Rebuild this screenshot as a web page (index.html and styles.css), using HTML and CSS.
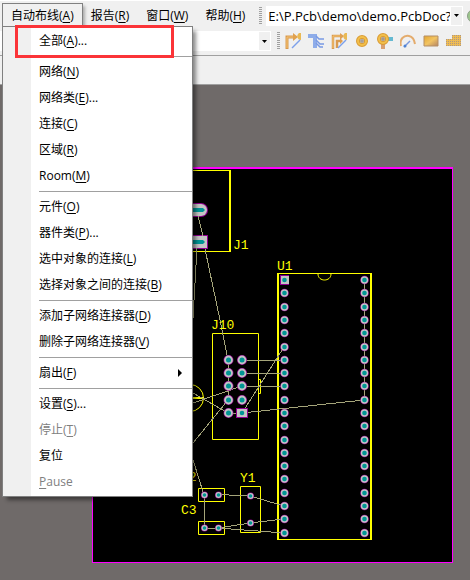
FILE: index.html
```html
<!DOCTYPE html>
<html lang="zh-CN">
<head>
<meta charset="utf-8">
<title>PCB 编辑器</title>
<link rel="stylesheet" href="styles.css">
</head>
<body>
<header class="menubar">
  <nav class="menus">
    <button class="menu-title open" type="button" aria-expanded="true">自动布线(<u>A</u>)</button>
    <button class="menu-title" type="button">报告(<u>R</u>)</button>
    <button class="menu-title" type="button">窗口(<u>W</u>)</button>
    <button class="menu-title" type="button">帮助(<u>H</u>)</button>
  </nav>
  <span class="grip"></span>
  <div class="address">
    <input class="address-text" type="text" aria-label="文档路径" value="E:\P.Pcb\demo\demo.PcbDoc?V">
    <button class="drop" type="button" aria-label="展开路径"><svg width="5" height="3" viewBox="0 0 5 3"><path d="M0 0h5L2.500 3z"/></svg></button>
  </div>
  <button class="go" type="button" aria-label="转到"><svg width="14" height="14" viewBox="0 0 14 14"><circle cx="7" cy="7" r="6.500" fill="#9cc68c" stroke="#8b9c86"/></svg></button>
</header>

<div class="toolbar">
  <div class="combo">
    <input class="combo-text" type="text" aria-label="过滤器">
    <button class="drop" type="button" aria-label="展开过滤器"><svg width="5" height="3" viewBox="0 0 5 3"><path d="M0 0h5L2.500 3z"/></svg></button>
  </div>
  <span class="grip"></span>
  <div class="tools">
    <button class="tool" type="button" aria-label="交互式布线"><svg viewBox="0 0 16 16"><path d="M2 16V4h8" fill="none" stroke="#d99a4e" stroke-width="3"/><path d="M2 15V4h7" fill="none" stroke="#f5c373"/><path d="M8 0l5 4-5 4z" fill="#e0a14e"/><path d="M16 0v7c-4 0-5-5-2-7z" fill="#e9b954"/><path d="M7 15l8-8" stroke="#7da0ea" stroke-width="1.500"/></svg></button>
    <button class="tool" type="button" aria-label="总线布线"><svg viewBox="0 0 16 16"><path d="M0 3h9M7 2v13" fill="none" stroke="#8eace9" stroke-width="4"/><path d="M8 3l3 3h5M8 7l4 4h4M8 10l4 4h3" fill="none" stroke="#7899e3" stroke-width="1.500"/></svg></button>
    <button class="tool" type="button" aria-label="差分对布线"><svg viewBox="0 0 16 16"><path d="M2 16V3h8M6 15V8h4" fill="none" stroke="#d99a4e" stroke-width="2.500"/><path d="M2 15V3h8" fill="none" stroke="#f5c373"/><path d="M9 0l4 3-4 4zM9 5l3 3-3 3z" fill="#dfa052"/><path d="M16 0v7c-4 0-5-5-2-7z" fill="#e9b954"/><path d="M7 15l8-8" stroke="#7da0ea" stroke-width="1.500"/></svg></button>
    <button class="tool" type="button" aria-label="放置焊盘"><svg viewBox="0 0 16 16"><circle cx="8" cy="8" r="4" fill="#eee" stroke="#d99b35" stroke-width="4"/><circle cx="8" cy="8" r="4" fill="none" stroke="#f2bf4a" stroke-width="2"/><circle cx="8" cy="8" r="2" fill="#aaa098"/></svg></button>
    <button class="tool" type="button" aria-label="放置过孔"><svg viewBox="0 0 16 16"><path d="M8 4h8v4H8z" fill="#65b9d1"/><path d="M4 8h4v8H4z" fill="#d9a071"/><circle cx="6" cy="6" r="4" fill="#eee" stroke="#d99b35" stroke-width="4"/><circle cx="6" cy="6" r="4" fill="none" stroke="#f2bf4a" stroke-width="2"/><circle cx="6" cy="6" r="2" fill="#a99a8a"/></svg></button>
    <button class="tool" type="button" aria-label="放置圆弧"><svg viewBox="0 0 16 16"><path d="M1 13C-1 6 4 2 9 3q5 1 6 8" fill="none" stroke="#e4ac6d" stroke-width="2"/><path d="M4 14l6-6" stroke="#7797de" stroke-width="1.500"/><circle cx="5" cy="13" r="1.500" fill="#4e83d4"/></svg></button>
    <button class="tool" type="button" aria-label="放置填充"><svg viewBox="0 0 16 16"><defs><linearGradient id="gold" x2="1" y2="1"><stop stop-color="#e3a52e"/><stop offset=".5" stop-color="#f2c463"/><stop offset="1" stop-color="#b58565"/></linearGradient></defs><path d="M1 3h14v10H1z" fill="url(#gold)" stroke="#b58f66"/></svg></button>
    <button class="tool" type="button" aria-label="放置覆铜"><svg viewBox="0 0 16 16"><defs><pattern id="mesh" width="2" height="2" patternUnits="userSpaceOnUse"><path d="M0 0h2v2H0z" fill="#efbc54"/><path d="M0 0h1v1H0z" fill="#ad9884"/></pattern></defs><path d="M6 2h9v11H0V6h6z" fill="url(#mesh)"/></svg></button>
  </div>
</div>

<div class="tabstrip"></div>

<main class="workspace">
  <svg class="board" viewBox="92 167 361 396" role="img" aria-label="PCB 布局">
    <defs>
      <g id="pin"><circle r="4.300" class="mask"/><circle r="3.700" class="pad"/><circle r="2.300" class="hole"/></g>
      <g id="pin-large"><circle r="5" class="mask"/><circle r="4.400" class="pad"/><circle r="2.500" class="hole"/></g>
      <g id="pin-small"><circle r="3.500" class="mask"/><circle r="3" class="pad"/><circle r="1.800" class="hole"/></g>
      <g id="column">
        <use href="#pin" y="293"/><use href="#pin" y="307"/><use href="#pin" y="320"/><use href="#pin" y="333"/><use href="#pin" y="347"/><use href="#pin" y="360"/><use href="#pin" y="373"/><use href="#pin" y="386"/><use href="#pin" y="400"/><use href="#pin" y="413"/><use href="#pin" y="426"/><use href="#pin" y="440"/><use href="#pin" y="453"/><use href="#pin" y="466"/><use href="#pin" y="479"/><use href="#pin" y="493"/><use href="#pin" y="506"/><use href="#pin" y="519"/><use href="#pin" y="533"/>
      </g>
    </defs>
    <path d="M92 167h361v396H92z" fill="#000"/>
    <path class="edge" d="M92.500 168v395M452.500 168v395M92 562.500h361"/>
    <path class="edge thick" d="M92 168h361"/>

    <g class="outline">
      <path d="M92 170.500h138M92 251.500h138"/>
      <path class="thick" d="M230 170v82"/>
      <path d="M212.500 333.500h46v106h-46zM258 379.500h2.500v14H258"/>
      <path d="M277 273.500h94M277 539.500h94M318 274c0 8 13 8 13 0"/>
      <path class="thick" d="M278 273v267M371 273v267"/>
      <path d="M198.500 488.500h26v13h-26zM198.500 521.500h26v13h-26zM240.500 486.500h20v46h-20z"/>
      <circle cx="190" cy="398" r="13.500"/>
      <path class="thick" d="M185 398h19"/>
    </g>

    <g class="pads">
      <rect x="170" y="203" width="38" height="14" rx="7" class="mask"/><rect x="170" y="204" width="37" height="12" rx="6" class="pad"/><path class="hole" d="M180 208h23l2 2-2 2h-23z"/>
      <path class="mask" d="M170 235h38v14h-38z"/><path class="pad" d="M170 236h37v12h-37z"/><path class="hole" d="M180 240h23l2 2-2 2h-23z"/>
    </g>

    <path class="net" d="M198 216L203 236M205 249L220 320L228 360V400L193 443M197 248L193 318M242 360.500H284M242 373.500H284M242 386.500H284M193 403L242 386M193 393L228 413H242L364 400M242 413L284 347M364.500 280V400M193 460L204 495V528H218L250 523L284 519M218 494.500L250 496L284 506M218 528L284 533"/>

    <g class="pads">
      <path class="mask" d="M280 275h9v10h-9z"/><path class="pad" d="M281 276h8v8h-8z"/><circle class="hole" cx="284.500" cy="280" r="2.300"/>
      <use href="#column" x="284.500"/><use href="#pin" x="364.500" y="280"/><use href="#column" x="364.500"/>
      <use href="#pin-large" x="228.500" y="360"/><use href="#pin-large" x="228.500" y="373"/><use href="#pin-large" x="228.500" y="386"/><use href="#pin-large" x="228.500" y="400"/><use href="#pin-large" x="228.500" y="413"/>
      <use href="#pin-large" x="242" y="360"/><use href="#pin-large" x="242" y="373"/><use href="#pin-large" x="242" y="386"/><use href="#pin-large" x="242" y="400"/>
      <path class="mask" d="M236 408h12v10h-12z"/><path class="pad" d="M237 409h10v8h-10z"/><circle class="hole" cx="242" cy="413" r="2.300"/>
      <use href="#pin-small" x="204.500" y="495"/><use href="#pin-small" x="218.500" y="495"/><use href="#pin-small" x="204.500" y="528"/><use href="#pin-small" x="218.500" y="528"/>
      <use href="#pin-small" x="250.500" y="496"/><use href="#pin-small" x="250.500" y="523"/>
    </g>

    <g class="label">
      <text x="233" y="249">J1</text>
      <text x="277" y="270">U1</text>
      <text x="211" y="329">J10</text>
      <text x="240" y="482">Y1</text>
      <text x="181" y="481">C2</text>
      <text x="181" y="514">C3</text>
    </g>
  </svg>
</main>

<div class="popup" role="menu">
  <div class="group">
    <button class="item" role="menuitem" type="button">全部(<u>A</u>)...</button>
  </div>
  <div class="group">
    <button class="item" role="menuitem" type="button">网络(<u>N</u>)</button>
    <button class="item" role="menuitem" type="button">网络类(<u>E</u>)...</button>
    <button class="item" role="menuitem" type="button">连接(<u>C</u>)</button>
    <button class="item" role="menuitem" type="button">区域(<u>R</u>)</button>
    <button class="item" role="menuitem" type="button">Room(<u>M</u>)</button>
  </div>
  <div class="group">
    <button class="item" role="menuitem" type="button">元件(<u>O</u>)</button>
    <button class="item" role="menuitem" type="button">器件类(<u>P</u>)...</button>
    <button class="item" role="menuitem" type="button">选中对象的连接(<u>L</u>)</button>
    <button class="item" role="menuitem" type="button">选择对象之间的连接(<u>B</u>)</button>
  </div>
  <div class="group">
    <button class="item" role="menuitem" type="button">添加子网络连接器(<u>D</u>)</button>
    <button class="item" role="menuitem" type="button">删除子网络连接器(<u>V</u>)</button>
  </div>
  <div class="group">
    <button class="item" role="menuitem" type="button" aria-haspopup="true"><span>扇出(<u>F</u>)</span><svg class="more" width="4" height="8" viewBox="0 0 4 8"><path d="M0 0l4 4-4 4z"/></svg></button>
  </div>
  <div class="group">
    <button class="item" role="menuitem" type="button">设置(<u>S</u>)...</button>
    <button class="item" role="menuitem" type="button" disabled>停止(<u>T</u>)</button>
    <button class="item" role="menuitem" type="button">复位</button>
    <button class="item" role="menuitem" type="button" disabled><u>P</u>ause</button>
  </div>
</div>
<div class="highlight"></div>
</body>
</html>
```
FILE: styles.css
```css
* { box-sizing: border-box; }

body {
  margin: 0;
  min-height: 100vh;
  display: flex;
  flex-direction: column;
  position: relative;
  overflow: hidden;
  background: #6f6a69;
  color: #000;
  font: 12px/16px "Open Sans", "Noto Sans CJK SC", sans-serif;
}

button, input {
  margin: 0;
  padding: 0;
  border: 0;
  background: none;
  color: inherit;
  font: inherit;
  white-space: nowrap;
}

u { text-underline-offset: 2px; }
svg { display: block; flex: none; }

.menubar, .toolbar {
  display: flex;
  align-items: center;
  background: #f0f0f0;
}

.menubar {
  height: 30px;
  border-top: 1px solid #fff;
}

.menus {
  display: flex;
  flex: none;
  gap: 1px;
  padding-left: 3px;
}

.menu-title {
  height: 24px;
  padding: 0 8px;
}

.menu-title.open {
  background: #f0f0f0;
  box-shadow: 0 0 0 1px #808080, 3px 2px 3px #aaa;
}

.grip {
  flex: none;
  width: 3px;
  height: 18px;
  margin: 0 4px 0 6px;
  background: repeating-linear-gradient(#a0a0a0 0 1px, #f0f0f0 1px 2px);
}

.address, .combo {
  display: flex;
  background: #fff;
  height: 20px;
}

.address { flex: 1; min-width: 0; }

.address-text {
  flex: 1;
  min-width: 0;
  padding-left: 2px;
  font-size: 13px;
}

.drop {
  width: 11px;
  margin: 1px;
  background: #f0f0f0;
  display: grid;
  place-items: center;
  flex: none;
}

.go {
  flex: none;
  width: 3px;
  margin-left: 4px;
  overflow: hidden;
}

.toolbar {
  height: 26px;
  padding-bottom: 3px;
  border-bottom: 1px solid #a0a0a0;
}

.combo { width: 271px; flex: none; }
.combo-text { flex: 1; min-width: 0; }

.tools {
  display: flex;
  gap: 7px;
  padding-left: 1px;
}

.tool { width: 16px; height: 16px; }

.tabstrip {
  height: 29px;
  background: #f0f0f0;
  border-bottom: 1px solid #a0a0a0;
}

.workspace { padding: 82px 17px 17px 92px; }

.board { width: 100%; }
.edge { stroke: #f0f; fill: none; shape-rendering: crispEdges; }
.outline { stroke: #ff0; fill: none; }
.thick { stroke-width: 2; }
.net { stroke: #a5a57a; fill: none; shape-rendering: crispEdges; }
.mask { fill: #900090; }
.pad { fill: #c4c4c4; }
.hole { fill: #009595; }
.label { fill: #ff0; font: 13px/1 "Liberation Mono", monospace; }

.popup {
  position: absolute;
  top: 26px;
  left: 2px;
  width: 191px;
  padding: 1px 0;
  border: 1px solid #808080;
  background: linear-gradient(90deg, #f0f0f0 28px, #fff 28px);
  box-shadow: 4px 4px 4px -1px rgba(0, 0, 0, .45);
}

.group + .group::before {
  content: "";
  display: block;
  height: 1px;
  margin: 2px 0 2px 36px;
  background: #a0a0a0;
}

.item {
  display: flex;
  align-items: center;
  width: 100%;
  height: 26px;
  padding: 0 10px 0 36px;
  text-align: left;
}

.item:disabled { color: #808080; }
.more { margin-left: auto; }

.highlight {
  position: absolute;
  top: 25px;
  left: 15px;
  width: 159px;
  height: 33px;
  border: 3px solid #fb3438;
  pointer-events: none;
}
```
